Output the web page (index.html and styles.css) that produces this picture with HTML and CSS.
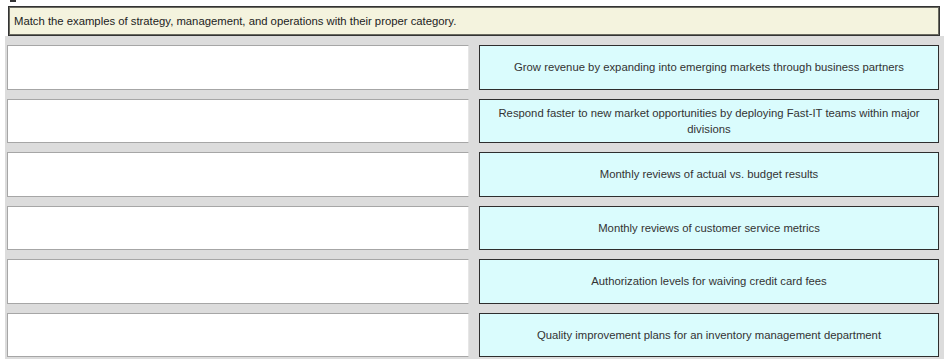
FILE: index.html
```html
<!DOCTYPE html>
<html>
<head>
<meta charset="utf-8">
<link rel="stylesheet" href="styles.css">
</head>
<body>
<div class="clip-mark"></div>
<div class="prompt">Match the examples of strategy, management, and operations with their proper category.</div>
<div class="board">
  <div class="slot"></div>
  <div class="item">Grow revenue by expanding into emerging markets through business partners</div>
  <div class="slot"></div>
  <div class="item">Respond faster to new market opportunities by deploying Fast-IT teams within major divisions</div>
  <div class="slot"></div>
  <div class="item">Monthly reviews of actual vs. budget results</div>
  <div class="slot"></div>
  <div class="item">Monthly reviews of customer service metrics</div>
  <div class="slot"></div>
  <div class="item">Authorization levels for waiving credit card fees</div>
  <div class="slot"></div>
  <div class="item">Quality improvement plans for an inventory management department</div>
</div>
</body>
</html>
```
FILE: styles.css
```css
html, body {
  margin: 0;
  padding: 0;
  background: #ffffff;
}
body {
  font-family: "Liberation Sans", Arial, sans-serif;
  font-size: 11.3px;
  color: #2a2a2a;
  width: 948px;
  height: 364px;
  overflow: hidden;
}
.clip-mark {
  width: 6px;
  height: 2px;
  margin-left: 10px;
  margin-bottom: 4px;
  background: #333;
}
.prompt {
  box-sizing: border-box;
  margin-left: 8px;
  width: 932px;
  height: 30px;
  border: 1px solid #333;
  box-shadow: inset 0 0 0 1px #6a6a60;
  background: #f4f3de;
  padding: 0 5px;
  display: flex;
  align-items: center;
  color: #222;
}
.board {
  box-sizing: border-box;
  margin-left: 5px;
  width: 939px;
  height: 323px;
  background: #dcdcdc;
  padding: 9px 5px 0 2px;
  display: grid;
  grid-template-columns: 462px 460px;
  column-gap: 10px;
  grid-auto-rows: 44.5px;
  row-gap: 9px;
}
.slot {
  box-sizing: border-box;
  background: #ffffff;
  border: 1px solid #a6a6a6;
  border-right-color: #e6e6e6;
}
.item {
  box-sizing: border-box;
  background: #dafcfd;
  border: 1px solid #2e2e2e;
  padding: 0 12px;
  display: flex;
  align-items: center;
  justify-content: center;
  text-align: center;
  line-height: 16px;
  color: #333;
}
```
